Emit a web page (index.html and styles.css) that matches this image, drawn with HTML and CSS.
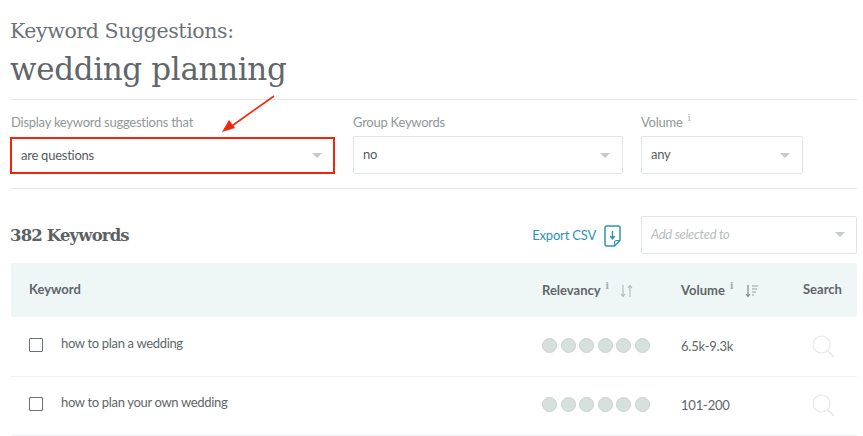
FILE: index.html
```html
<!DOCTYPE html>
<html lang="en">
<head>
<meta charset="utf-8">
<title>Keyword Suggestions</title>
<link rel="stylesheet" href="styles.css">
</head>
<body>
<main class="page">
  <header class="head">
    <h2 class="kicker">Keyword Suggestions:</h2>
    <h1 class="term">wedding planning</h1>
  </header>
  <section class="filters">
    <div class="field f1">
      <label class="lab">Display keyword suggestions that</label>
      <div class="sel hot"><span>are questions</span><i class="caret"></i></div>
      <svg class="arrow" width="60" height="42" viewBox="0 0 60 42"><path d="M53 1 L8 33" stroke="#f0280f" stroke-width="1.6" fill="none"/><path d="M1 37 L14 33 L8 25 Z" fill="#f0280f"/></svg>
    </div>
    <div class="field f2">
      <label class="lab">Group Keywords</label>
      <div class="sel"><span>no</span><i class="caret"></i></div>
    </div>
    <div class="field f3">
      <label class="lab">Volume <sup class="info">i</sup></label>
      <div class="sel"><span>any</span><i class="caret"></i></div>
    </div>
  </section>
  <section class="bar">
    <h3 class="count">382 Keywords</h3>
    <a class="export">Export CSV
      <svg width="17" height="22" viewBox="0 0 17 22"><path d="M2.5 1h12a1.500 1.500 0 0 1 1.500 1.500V15.500L10.500 21H2.500A1.500 1.500 0 0 1 1 19.500V2.500A1.500 1.500 0 0 1 2.500 1Z" fill="none" stroke="#2e93b5" stroke-width="1.500"/><path d="M10.500 21v-4a1.500 1.500 0 0 1 1.500-1.500h4" fill="none" stroke="#2e93b5"/><path d="M8.500 6v7.500M6.300 11l2.200 2.800L10.700 11" fill="none" stroke="#2e93b5" stroke-width="1.400"/></svg>
    </a>
    <div class="sel add"><em>Add selected to</em><i class="caret"></i></div>
  </section>
  <section class="table">
    <div class="row thead">
      <div class="c-key">Keyword</div>
      <div class="c-rel">Relevancy <sup class="info">i</sup>
        <svg class="sort" width="13" height="14" viewBox="0 0 13 14"><path d="M3 1v11M1 10l2 2.500L5 10M10 13V2M8 4l2-2.500L12 4" fill="none" stroke="#b4bcbc" stroke-width="1.200"/></svg>
      </div>
      <div class="c-vol">Volume <sup class="info">i</sup>
        <svg class="sort" width="13" height="14" viewBox="0 0 13 14"><path d="M3 1v11M1 10l2 2.500L5 10" fill="none" stroke="#7f8a8a" stroke-width="1.200"/><path d="M7 2h6M7 5h5M7 8h4M7 11h2" stroke="#98a2a2" stroke-width="1.200"/></svg>
      </div>
      <div class="c-search">Search</div>
    </div>
    <div class="row item">
      <div class="c-key"><span class="check"></span><span>how to plan a wedding</span></div>
      <div class="c-rel dots"><i></i><i></i><i></i><i></i><i></i><i></i></div>
      <div class="c-vol">6.5k-9.3k</div>
      <div class="c-search"><svg width="23" height="23" viewBox="0 0 23 23"><circle cx="9.500" cy="9.500" r="8.500" fill="none" stroke="#e3e9e7" stroke-width="1.200"/><path d="M15.500 15.500L22 22" stroke="#e3e9e7" stroke-width="1.600"/></svg></div>
    </div>
    <div class="row item">
      <div class="c-key"><span class="check"></span><span>how to plan your own wedding</span></div>
      <div class="c-rel dots"><i></i><i></i><i></i><i></i><i></i><i></i></div>
      <div class="c-vol">101-200</div>
      <div class="c-search"><svg width="23" height="23" viewBox="0 0 23 23"><circle cx="9.500" cy="9.500" r="8.500" fill="none" stroke="#e3e9e7" stroke-width="1.200"/><path d="M15.500 15.500L22 22" stroke="#e3e9e7" stroke-width="1.600"/></svg></div>
    </div>
  </section>
</main>
</body>
</html>
```
FILE: styles.css
```css
* { box-sizing: border-box; }
html, body { margin: 0; height: 100%; background: #fff; overflow: hidden; }
body { font-family: Lato, "Liberation Sans", sans-serif; color: #5b6366; }
.page { padding: 0 6px 0 10px; width: 863px; }
.head { height: 100px; padding-top: 18px; border-bottom: 1px solid #e1e7e7; margin-left: 1px; }
.kicker { margin: 0 0 0 -1px; font: 300 20.500px/26px "DejaVu Serif", serif; color: #6b7275; letter-spacing: -0.400px; }
.term { margin: 2px 0 0 -1px; font: 300 31px/46px "DejaVu Serif", serif; color: #5f676b; letter-spacing: -0.350px; }
.filters { display: flex; height: 89px; border-bottom: 1px solid #e1e7e7; margin-left: 1px; padding-top: 13px; }
.field { position: relative; }
.f1 { width: 343px; margin-left: -1px; }
.f2 { width: 288px; }
.f3 { width: 162px; }
.lab { display: block; height: 23px; font-size: 13px; line-height: 18px; color: #8f9798; letter-spacing: -0.250px; }
.f1 .lab { margin-left: 1px; }
.info { font-size: 9px; line-height: 0; vertical-align: 6px; margin-left: 2px; color: #a4abab; font-family: "DejaVu Serif", serif; }
.sel { display: flex; align-items: center; justify-content: space-between; height: 38px; padding: 0 12px 2px 9px; border: 1px solid #dfe5e5; border-radius: 2px; font-size: 13px; letter-spacing: -0.250px; color: #555c5f; background: #fff; }
.f2 .sel { width: 270px; }
.f3 .sel { width: 162px; }
.sel.hot { width: 325px; border: 2px solid #f0240f; border-radius: 0; height: 37px; padding-left: 9px; padding-right: 11px; margin-top: 1px; }
.caret { width: 0; height: 0; border-left: 5px solid transparent; border-right: 5px solid transparent; border-top: 5px solid #c3caca; margin-top: 2px; }
.arrow { position: absolute; left: 211px; top: -18px; }
.bar { display: flex; align-items: center; height: 74px; padding-top: 17px; }
.count { margin: 0; font: 700 16.500px/22px "DejaVu Serif", serif; color: #5b6264; letter-spacing: -0.850px; margin-top: 2px; }
.export { display: flex; align-items: center; gap: 8px; margin-left: auto; margin-right: 20px; font-size: 13px; letter-spacing: -0.200px; color: #2e93b5; }
.export svg { margin-top: 2px; }
.add { width: 216px; height: 38px; padding-right: 11px; }
.add em { font-size: 13px; color: #b8bdbd; font-weight: 400; letter-spacing: -0.300px; }
.table { margin-left: 1px; }
.row { display: flex; align-items: center; width: 846px; font-size: 13px; }
.thead { height: 54px; margin-bottom: 1px; background: #eef6f6; font-weight: 700; color: #5e6669; }
.thead .c-key { margin-top: -2px; }
.item { height: 59px; border-bottom: 1px solid #eef2f2; color: #5e6669; padding-bottom: 8px; letter-spacing: -0.330px; }
.c-key { display: flex; align-items: center; width: 531px; padding-left: 18px; }
.check { width: 14px; height: 14px; border: 1px solid #6a7174; border-radius: 1px; margin: 4px 18px 0 0; }
.c-rel { width: 139px; }
.c-vol { width: 122px; }
.item .c-vol { letter-spacing: -0.200px; padding-top: 5px; }
.c-search { flex: 1; }
.thead .c-search { margin-top: -2px; }
.item .c-search { padding: 10px 0 0 9px; }
.sort { vertical-align: -3px; margin-left: 8px; }
.dots { display: flex; gap: 3.600px; padding-top: 4px; }
.dots i { width: 15px; height: 15px; border-radius: 50%; background: #d8e0dd; border: 1px solid #c9d2cf; }
```
